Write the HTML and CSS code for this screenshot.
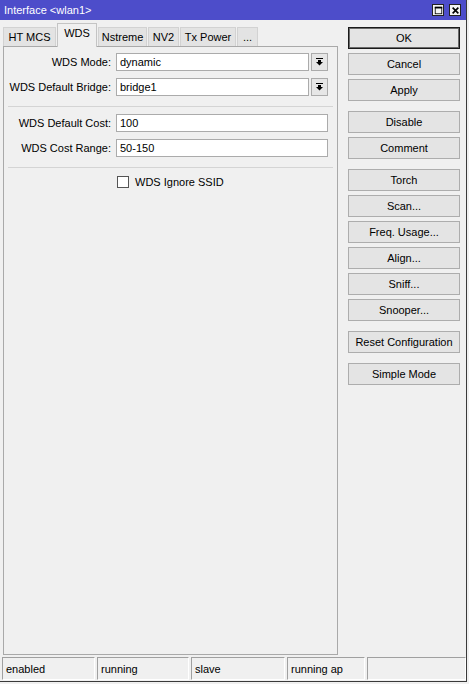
FILE: index.html
```html
<!DOCTYPE html>
<html lang="en">
<head>
  <meta charset="UTF-8">
  <title>Interface &lt;wlan1&gt;</title>
  <link rel="stylesheet" href="styles.css">
</head>
<body>
  <div class="window">
    <div class="titlebar">
      <span class="title">Interface &lt;wlan1&gt;</span>
      <div class="title-buttons">
        <span class="tb-btn">
          <svg width="11" height="11" viewBox="0 0 11 11"><rect x="1.5" y="1.5" width="8" height="8" fill="none" stroke="#000"/><rect x="1" y="1" width="9" height="2" fill="#000"/></svg>
        </span>
        <span class="tb-btn">
          <svg width="11" height="11" viewBox="0 0 11 11"><path d="M2 2 L9 9 M9 2 L2 9" stroke="#000" stroke-width="2"/></svg>
        </span>
      </div>
    </div>

    <div class="content">
      <div class="main">
        <div class="tabs">
          <div class="tab tab-htmcs">HT MCS</div>
          <div class="tab tab-wds active">WDS</div>
          <div class="tab tab-nstreme">Nstreme</div>
          <div class="tab tab-nv2">NV2</div>
          <div class="tab tab-txpower">Tx Power</div>
          <div class="tab tab-more">...</div>
        </div>
        <div class="panel">
          <div class="row">
            <span class="label">WDS Mode:</span>
            <div class="field">dynamic</div>
            <div class="drop">
              <svg width="7" height="8" viewBox="0 0 7 8"><rect x="0" y="0" width="7" height="1" fill="#000"/><rect x="2" y="2" width="3" height="2" fill="#000"/><polygon points="0,4 7,4 3.5,7.5" fill="#000"/></svg>
            </div>
          </div>
          <div class="row">
            <span class="label">WDS Default Bridge:</span>
            <div class="field">bridge1</div>
            <div class="drop">
              <svg width="7" height="8" viewBox="0 0 7 8"><rect x="0" y="0" width="7" height="1" fill="#000"/><rect x="2" y="2" width="3" height="2" fill="#000"/><polygon points="0,4 7,4 3.5,7.5" fill="#000"/></svg>
            </div>
          </div>
          <div class="sep"></div>
          <div class="row">
            <span class="label">WDS Default Cost:</span>
            <div class="field">100</div>
          </div>
          <div class="row">
            <span class="label">WDS Cost Range:</span>
            <div class="field">50-150</div>
          </div>
          <div class="sep"></div>
          <div class="check-row">
            <span class="checkbox"></span>
            <span>WDS Ignore SSID</span>
          </div>
        </div>
      </div>

      <div class="actions">
        <div class="btn-group">
          <div class="btn default">OK</div>
          <div class="btn">Cancel</div>
          <div class="btn">Apply</div>
        </div>
        <div class="btn-group">
          <div class="btn">Disable</div>
          <div class="btn">Comment</div>
        </div>
        <div class="btn-group">
          <div class="btn">Torch</div>
          <div class="btn">Scan...</div>
          <div class="btn">Freq. Usage...</div>
          <div class="btn">Align...</div>
          <div class="btn">Sniff...</div>
          <div class="btn">Snooper...</div>
        </div>
        <div class="btn-group">
          <div class="btn">Reset Configuration</div>
        </div>
        <div class="btn-group">
          <div class="btn">Simple Mode</div>
        </div>
      </div>
    </div>

    <div class="statusbar">
      <div class="cell c1">enabled</div>
      <div class="cell c2">running</div>
      <div class="cell c3">slave</div>
      <div class="cell c4">running ap</div>
      <div class="cell c5"></div>
    </div>
  </div>
</body>
</html>
```

FILE: styles.css
```css
*{
  box-sizing: border-box;
}

body{
  margin: 0;
  background-color: #f0f0f0;
  font-family: "Liberation Sans", Arial, sans-serif;
  font-size: 11px;
  color: #000;
}

.window{
  width: 467px;
  height: 682px;
  border-right: 1px solid #3a3a3a;
  border-bottom: 1px solid #3a3a3a;
  background-color: #f0f0f0;
  display: flex;
  flex-direction: column;
}

/* title bar */
.titlebar{
  height: 20px;
  background-color: #4d4dca;
  display: flex;
  align-items: center;
  justify-content: space-between;
  padding: 0 5px 0 4px;
}
.title{
  color: #fff;
}
.title-buttons{
  display: flex;
  gap: 5px;
}
.tb-btn{
  width: 12px;
  height: 12px;
  background-color: #f4f4f4;
  border: 1px solid #222;
  display: flex;
  align-items: center;
  justify-content: center;
}
.tb-btn svg{
  width: 9px;
  height: 9px;
}

/* main area */
.content{
  height: 636px;
  display: flex;
}
.main{
  width: 335px;
  margin-left: 3px;
  padding-top: 3px;
  display: flex;
  flex-direction: column;
}

.tabs{
  height: 23px;
  display: flex;
  align-items: flex-end;
}
.tab{
  height: 19px;
  background-color: #e3e3e3;
  border: 1px solid #d2d2d2;
  border-bottom: none;
  text-align: center;
  line-height: 18px;
  margin-right: 1px;
}
.tab.active{
  height: 24px;
  margin-bottom: -1px;
  background-color: #f0f0f0;
  border-color: #c4c4c4;
  line-height: 19px;
  position: relative;
  z-index: 1;
}
.tab-htmcs{ width: 53px; }
.tab-wds{ width: 40px; }
.tab-nstreme{ width: 49px; }
.tab-nv2{ width: 31px; }
.tab-txpower{ width: 56px; }
.tab-more{ width: 21px; }

.panel{
  height: 609px;
  border: 1px solid #a9a9a9;
  padding-top: 6px;
  display: flex;
  flex-direction: column;
}

.row{
  height: 18px;
  margin-bottom: 7px;
  display: flex;
  align-items: center;
  padding-right: 9px;
}
.label{
  width: 107px;
  text-align: right;
  margin-right: 5px;
}
.field{
  flex: 1;
  height: 18px;
  background-color: #fff;
  border: 1px solid #ababab;
  padding-left: 3px;
  line-height: 17px;
}
.drop{
  width: 17px;
  height: 18px;
  margin-left: 2px;
  background-color: #e6e6e6;
  border: 1px solid #ababab;
  display: flex;
  align-items: center;
  justify-content: center;
}

.sep{
  height: 1px;
  background-color: #d4d4d4;
  margin: 3px 4px 7px 4px;
}

.check-row{
  display: flex;
  align-items: center;
  padding-left: 113px;
  height: 13px;
}
.checkbox{
  width: 12px;
  height: 12px;
  background-color: #fff;
  border: 1px solid #555;
  margin-right: 6px;
}

/* right buttons */
.actions{
  width: 112px;
  margin-left: 10px;
  padding-top: 7px;
  display: flex;
  flex-direction: column;
}
.btn-group{
  margin-bottom: 6px;
  display: flex;
  flex-direction: column;
}
.btn{
  height: 22px;
  margin-bottom: 4px;
  background-color: #e4e4e4;
  border: 1px solid #adadad;
  text-align: center;
  line-height: 21px;
}
.btn.default{
  border-color: #1a1a1a;
  box-shadow: inset 0 0 0 1px #6a6a6a;
}

/* status bar */
.statusbar{
  height: 25px;
  display: flex;
  gap: 2px;
  padding: 1px 0 0 2px;
}
.cell{
  height: 23px;
  border-top: 1px solid #a0a0a0;
  border-left: 1px solid #a0a0a0;
  border-right: 1px solid #fff;
  border-bottom: 1px solid #fff;
  padding-left: 3px;
  line-height: 22px;
}
.c1{ width: 93px; }
.c2{ width: 92px; }
.c3{ width: 94px; }
.c4{ width: 78px; }
.c5{ width: 99px; }
```
